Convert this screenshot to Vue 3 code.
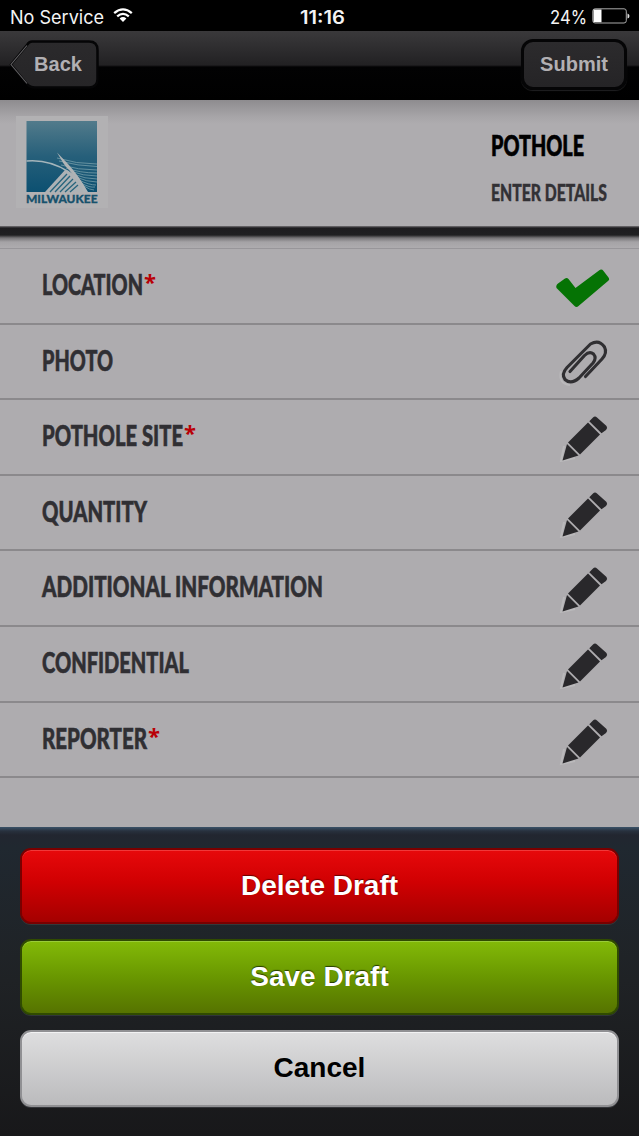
<script setup>
const rows = [
  { label: 'LOCATION', width: 101, required: true, icon: 'check' },
  { label: 'PHOTO', width: 71, icon: 'clip' },
  { label: 'POTHOLE SITE', width: 141, required: true, icon: 'pencil' },
  { label: 'QUANTITY', width: 105, icon: 'pencil' },
  { label: 'ADDITIONAL INFORMATION', width: 281, icon: 'pencil' },
  { label: 'CONFIDENTIAL', width: 147, icon: 'pencil' },
  { label: 'REPORTER', width: 105, required: true, icon: 'pencil' },
]
</script>

<template>
  <div class="screen">
    <header class="status">
      <div class="carrier">
        <svg class="carrier-text" width="94" height="30"><text x="0" y="22.5" textLength="94" lengthAdjust="spacingAndGlyphs">No Service</text></svg>
        <svg class="wifi" width="20" height="15" viewBox="0 0 20 15">
          <path d="M1.2 5.2Q10-2.4 18.8 5.2M4.2 8.4Q10 3.4 15.8 8.4" fill="none" stroke="#fff" stroke-width="2.3" />
          <path d="M10 13.9 6.6 10.5Q10 7.7 13.4 10.5Z" fill="#fff" />
        </svg>
      </div>
      <svg class="clock" width="45" height="30"><text x="0" y="22.5" textLength="45" lengthAdjust="spacingAndGlyphs">11:16</text></svg>
      <div class="power">
        <svg width="37" height="30"><text x="0" y="22.5" textLength="37" lengthAdjust="spacingAndGlyphs">24%</text></svg>
        <svg class="battery" width="38" height="16" viewBox="0 0 38 16">
          <rect x=".8" y=".8" width="33.5" height="14.2" rx="2.3" fill="none" stroke="#aaa" stroke-width="1" />
          <path d="M1.5 1.5H9.5V14.2H1.500Z" fill="#fff" />
          <path d="M35.500 5.5Q37.500 6 37.500 8T35.500 10.5Z" fill="#ddd" />
        </svg>
      </div>
    </header>

    <nav class="nav">
      <button class="back">
        <svg class="back-shape" width="92" height="54" viewBox="0 0 92 54">
          <defs>
            <linearGradient id="back-fill" x2="0" y2="1"><stop stop-color="#2b2a2c" /><stop offset="1" stop-color="#262527" /></linearGradient>
          </defs>
          <path d="M23 3.5H80Q88.500 3.500 88.500 12V41Q88.500 49.500 80 49.500H26Q21 49.500 18 46L2 26.500 18 7Q20 3.500 23 3.500Z" fill="url(#back-fill)" stroke="#050506" stroke-width="2.500" />
          <path d="M18 7.500 2 26.500 18 45.500" fill="none" stroke="#626164" stroke-width="1.100" />
        </svg>
        <span>Back</span>
      </button>
      <button class="submit">Submit</button>
    </nav>

    <section class="head">
      <div class="logo">
        <svg width="92" height="92" viewBox="0 0 92 92">
          <defs>
            <linearGradient id="sky" x2="0" y2="1">
              <stop stop-color="#527b8b" /><stop offset=".5" stop-color="#265f7a" /><stop offset="1" stop-color="#0c5071" />
            </linearGradient>
          </defs>
          <rect x="10.500" y="5" width="70.500" height="71" fill="url(#sky)" />
          <path d="M10.500 45Q33 43 53 56" fill="none" stroke="#a5b5bb" stroke-width="1.500" />
          <g fill="none" stroke="#769eaa" stroke-width=".8">
            <path d="M41 42Q60 48 81 48M43 45Q62 50 81 50.500M45 49Q62 54 81 54M50 52Q64 57 81 57M54 55Q67 60 81 60M57 58Q69 63 81 63M60 61Q71 66 81 66M63 64Q73 69 80 69M65 67Q74 72 79 71M68 70Q74 74 78 74" />
          </g>
          <path d="M41 36.500 52 48Q63 60 72 76H66Q60 62 54 55Q48 49 46 45Z" fill="#b0b4b6" />
          <path d="M29 76 49 54Q62 57 67 76Z" fill="#adb2b5" />
          <path d="M34 76 51 58M39 76 54 60M44 76 57 63M49 76 60 66M54 76 62 69" stroke="#28657d" stroke-width="1.300" />
          <text x="10" y="87" textLength="71.500" lengthAdjust="spacingAndGlyphs">MILWAUKEE</text>
        </svg>
      </div>
      <div class="titles">
        <svg width="130" height="30"><text class="title" x="1" y="24" textLength="93" lengthAdjust="spacingAndGlyphs">POTHOLE</text></svg>
        <svg width="130" height="24"><text class="subtitle" x="1" y="18.500" textLength="116" lengthAdjust="spacingAndGlyphs">ENTER DETAILS</text></svg>
      </div>
    </section>
    <div class="band"></div>

    <main class="list">
      <div v-for="row in rows" :key="row.label" class="row">
        <div class="label">
          <svg :width="row.width" height="34"><text x="0" y="27" :textLength="row.width" lengthAdjust="spacingAndGlyphs">{{ row.label }}</text></svg>
          <span v-if="row.required" class="star">*</span>
        </div>
        <svg v-if="row.icon === 'check'" class="icon" width="60" height="60" viewBox="0 0 60 60">
          <path d="M5 27.500 12 22.500Q14 21.500 15.500 23L22.500 32 46 14.500Q48.500 12.500 50.500 15L55.500 21.500Q57 23.500 55 25L25.500 50Q23.500 52 21.500 50L3.500 32Q2.500 29.500 5 27.500Z" fill="#057304" />
        </svg>
        <svg v-else-if="row.icon === 'clip'" class="icon" width="60" height="60" viewBox="0 0 60 60">
          <path d="M8 39Q5 52 17 53" fill="none" stroke="#bab9bb" stroke-width="2" />
          <path d="M32.500 44.500 49 27Q54.500 21 51.500 15Q46 7 37.500 12L14 35.500Q8 42 12 47.500Q18 53 26 46L40 31Q44 26 40.500 22Q36.500 18.500 31.500 23.500L17 39.500" fill="none" stroke="#302f32" stroke-width="3.100" stroke-linecap="round" stroke-linejoin="round" />
        </svg>
        <svg v-else class="icon" width="60" height="60" viewBox="0 0 60 60">
          <path d="M11 39 8 54 22 51" fill="none" stroke="#bab9bb" stroke-width="2" />
          <path d="M15 35.500 35 15.500 47 27.500 27 47.500Z" fill="#29282b" />
          <path d="M36.300 14.200 40 10.500Q42 8.500 44 10.500L53.500 19Q55 21 53 23L48.500 26.200Z" fill="#29282b" />
          <path d="M14 37 25.500 48.500 9.500 53.500Z" fill="#29282b" />
        </svg>
      </div>
    </main>

    <footer class="sheet">
      <button class="action red">Delete Draft</button>
      <button class="action green">Save Draft</button>
      <button class="action grey">Cancel</button>
    </footer>
  </div>
</template>

<style>
body { background: #aeacaf; }
</style>

<style scoped>
* { box-sizing: border-box; }
.screen { width: 639px; height: 1136px; display: flex; flex-direction: column; background: #aeacaf; overflow: hidden; font-family: "Liberation Sans", Arial, sans-serif; }
svg { display: block; flex: none; overflow: visible; }
button { font-family: inherit; margin: 0; padding: 0; border: 0; }
.status { height: 31px; flex: none; background: #000; color: #fff; display: grid; grid-template-columns: 1fr auto 1fr; align-items: center; padding: 0 9px 0 10px; }
.status text { fill: #f4f4f4; font: 18.500px Inter, sans-serif; }
.carrier { display: flex; align-items: center; gap: 9px; }
.status .clock { margin-left: 4px; }
.status .clock text { font: 600 18px Inter, sans-serif; }
.power { display: flex; align-items: center; justify-content: flex-end; gap: 5px; }
.nav { height: 69px; flex: none; display: flex; justify-content: space-between; padding: 7px 12px 0 9px; background: linear-gradient(#3a393b, #222123 34px, #020203 36px, #000); }
.nav button { color: #b2b0b3; font-size: 20px; font-weight: bold; }
.back { width: 92px; height: 54px; background: none; display: grid; }
.back > * { grid-area: 1 / 1; }
.back span { align-self: center; padding: 0 0 1px 6px; }
.nav .submit { width: 106px; height: 51px; margin-top: 1px; border: 3px solid #050506; border-radius: 12px; background: linear-gradient(#2c2b2d, #252426); box-shadow: 0 1px 1px #202022; }
.head { height: 126px; flex: none; display: flex; justify-content: space-between; padding: 16px 19px 0 16px; background: linear-gradient(#8e8c8f, #a6a4a7 16px, #aeacaf 24px); }
.logo { width: 92px; height: 92px; background: #b2b1b3; }
.logo text { font: 900 11.500px Lato, sans-serif; fill: #17516c; stroke: #17516c; stroke-width: .3px; }
.titles { display: flex; flex-direction: column; gap: 20px; padding-top: 16px; }
.title { font: 900 29px Lato, sans-serif; fill: #000; stroke: #000; stroke-width: .7px; }
.subtitle { font: 900 22.500px Lato, sans-serif; fill: #323135; stroke: #323135; stroke-width: .4px; }
.band { height: 23px; flex: none; background: linear-gradient(#777578, #1d1c1f 2px, #202022 9px, #777578 12px, #a5a3a6 16px, #aeacaf 22px); border-bottom: 1px solid #98969a; }
.list { display: flex; flex-direction: column; flex: none; height: 578px; }
.row { height: 75.600px; flex: none; border-bottom: 2px solid #8b898c; display: flex; justify-content: space-between; padding: 0 26px 0 42px; }
.label { display: flex; padding-top: 19px; }
.label text { font: 900 29px Lato, sans-serif; fill: #302f33; stroke: #302f33; stroke-width: .6px; }
.star { color: #b90006; font: bold 22px/27px "Open Sans", sans-serif; margin-left: 1px; }
.icon { margin-top: 7px; }
.sheet { flex: 1; display: flex; flex-direction: column; gap: 15px; padding: 20.500px 20px 0; background: linear-gradient(#3a5268, #28313e 4px, #222630 8px, #202830 20px, #1f2225 50%, #18181a); }
.action { height: 76px; flex: none; border-radius: 11px; font-size: 28px; font-weight: bold; color: #fff; padding-bottom: 0; }
.red { border: 2px solid #790000; background: linear-gradient(#e7090b, #d00002 45%, #a40000); box-shadow: inset 0 1px #f03839, 0 1px #35383a; text-shadow: 0 -1px 1px #600; }
.green { border: 2px solid #304b00; background: linear-gradient(#83ba08, #699700 50%, #567300); box-shadow: inset 0 1px #9acc3a, 0 1px #303638; text-shadow: 0 -1px 1px #253b00; }
.grey { height: 77px; border: 2px solid #909093; color: #000; background: linear-gradient(#dededf, #bbbbbd); box-shadow: inset 0 1px #f2f2f3, 0 1px #34363a; }
</style>
